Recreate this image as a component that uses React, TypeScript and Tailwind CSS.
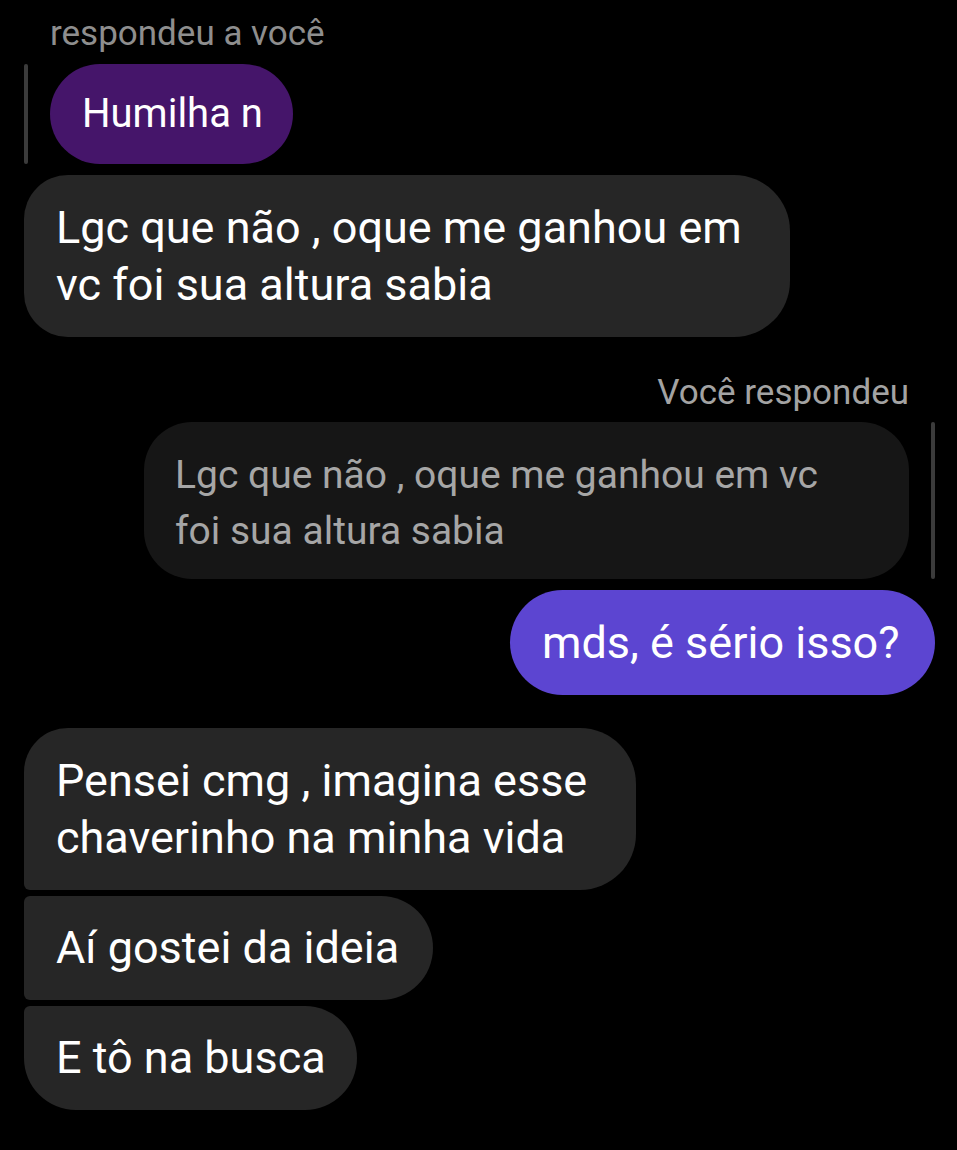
import React from 'react';

const font = { fontFamily: 'Roboto, "Noto Sans", sans-serif' };

const App: React.FC = () => {
  return (
    <div className="w-[957px] h-[1150px] bg-black overflow-hidden" style={font}>
      {/* Reply from them */}
      <div className="pl-[50px] pt-[14px] text-[35px] leading-[40px] text-[#8e8e8e]">respondeu a você</div>
      <div className="flex items-stretch gap-[22px] pl-[24px] mt-[10px]">
        <div className="w-[4px] rounded-full bg-[#3b3b3b]"></div>
        <div className="w-[243px] h-[100px] pl-[32px] flex items-center rounded-full bg-[#45156a] text-white text-[40px] whitespace-nowrap">Humilha n</div>
      </div>

      <div className="pl-[24px] mt-[11px]">
        <div className="w-[766px] rounded-l-[44px] rounded-r-[56px] bg-[#262626] text-white text-[45px] leading-[57px] px-[32px] py-[24px] whitespace-nowrap">
          <div>Lgc que não , oque me ganhou em</div>
          <div>vc foi sua altura sabia</div>
        </div>
      </div>

      {/* My reply */}
      <div className="flex justify-end pr-[48px] mt-[36px] text-[35px] leading-[40px] text-[#a3a3a3]">Você respondeu</div>
      <div className="flex justify-end items-stretch gap-[22px] pr-[22px] mt-[9px]">
        <div className="w-[765px] h-[157px] rounded-[48px] bg-[#161616] text-[#a6a6a6] text-[39px] leading-[56px] px-[31px] pt-[25px] whitespace-nowrap">
          <div>Lgc que não , oque me ganhou em vc</div>
          <div>foi sua altura sabia</div>
        </div>
        <div className="w-[4px] rounded-full bg-[#3b3b3b]"></div>
      </div>
      <div className="flex justify-end pr-[22px] mt-[11px]">
        <div className="w-[425px] h-[105px] pl-[32px] flex items-center rounded-full bg-[#5c45d1] text-white text-[45px] whitespace-nowrap">mds, é sério isso?</div>
      </div>

      {/* Their messages */}
      <div className="flex flex-col items-start gap-[6px] pl-[24px] mt-[33px]">
        <div className="w-[612px] rounded-tl-[44px] rounded-bl-[6px] rounded-r-[56px] bg-[#262626] text-white text-[45px] leading-[57px] px-[32px] py-[24px] whitespace-nowrap">
          <div>Pensei cmg , imagina esse</div>
          <div>chaverinho na minha vida</div>
        </div>
        <div className="w-[409px] h-[104px] flex items-center rounded-l-[6px] rounded-r-[52px] bg-[#262626] text-white text-[45px] px-[32px] whitespace-nowrap">
          Aí gostei da ideia
        </div>
        <div className="w-[333px] h-[104px] flex items-center rounded-tl-[6px] rounded-bl-[52px] rounded-r-[52px] bg-[#262626] text-white text-[45px] px-[32px] whitespace-nowrap">
          E tô na busca
        </div>
      </div>
    </div>
  );
};

export default App;
